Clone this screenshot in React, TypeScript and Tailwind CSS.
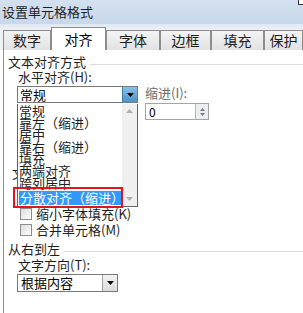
import React from "react";

const font = { fontFamily: '"Noto Sans CJK SC", "Liberation Sans", sans-serif' };

const tabs = ["数字", "对齐", "字体", "边框", "填充", "保护"];
const tabWidths = [48, 55, 54, 51, 53, 39];

const items = ["常规", "靠左（缩进）", "居中", "靠右（缩进）", "填充", "两端对齐", "跨列居中", "分散对齐（缩进）"];

function Arrow({ color = "#000" }: { color?: string }) {
  return (
    <svg width="7" height="4" viewBox="0 0 7 4">
      <path d="M0 0h7L3.5 4z" fill={color} />
    </svg>
  );
}

function Group({ title }: { title: string }) {
  return (
    <div className="flex items-center gap-1 h-[14px]">
      <span className="text-[13px] leading-[14px] text-[#1e1e1e]">{title}</span>
      <div className="flex-1 h-px bg-[#dcdcdc] mt-1" />
    </div>
  );
}

function Check({ label }: { label: string }) {
  return (
    <div className="flex items-center gap-[4px] h-[16px] pl-[12px]">
      <div className="w-[12px] h-[12px] border border-[#8f8f8f] bg-gradient-to-br from-[#dcdcdc] to-white" />
      <span className="text-[13px] leading-[14px] text-[#1e1e1e]">{label}</span>
    </div>
  );
}

export default function App() {
  return (
    <div className="w-[303px] h-[313px] bg-white overflow-hidden relative" style={font}>
      <div className="h-[24px] bg-gradient-to-b from-[#d3e0ef] to-[#c8d9ec] flex items-center pl-[2px] relative">
        <span className="text-[13px] leading-[14px] text-[#1e1e1e]">设置单元格格式</span>
        <div className="absolute right-[-2px] top-[-2px] w-[7px] h-[7px] border border-[#333] bg-white" />
      </div>
      <div className="h-[6px] bg-gradient-to-b from-[#dfe8f2] to-[#eef1f5]" />
      <div className="h-[20px] bg-[#eef1f5] flex items-end pl-[3px] relative">
        {tabs.map((t, i) =>
          i === 1 ? (
            <div
              key={t}
              style={{ width: tabWidths[i] }}
              className="h-[23px] -mt-[3px] bg-white border border-b-0 border-[#8d8d8d] flex items-center justify-center text-[14px] relative z-10"
            >
              {t}
            </div>
          ) : (
            <div
              key={t}
              style={{ width: tabWidths[i] }}
              className="h-[20px] bg-gradient-to-b from-[#f4f4f4] to-[#e2e2e2] border border-[#8d8d8d] border-b-0 flex items-center justify-center text-[14px] text-[#1e1e1e]"
            >
              {t}
            </div>
          )
        )}
      </div>
      <div className="ml-[3px] border-l border-[#8d8d8d] h-[263px] pl-[4px] pt-[5px] relative">
        <Group title="文本对齐方式" />
        <div className="pl-[10px] mt-[1px] text-[13px] leading-[14px] text-[#1e1e1e]">水平对齐(H):</div>
        <div className="flex items-start mt-[2px] pl-[9px]">
          <div className="w-[121px] h-[17px] border border-[#7a7a7a] flex items-center">
            <span className="flex-1 text-[13px] leading-[14px] pl-[2px]">常规</span>
            <div className="w-[15px] h-full bg-gradient-to-b from-[#8ac0e6] to-[#4d93c7] border-l border-[#3d7bad] flex items-center justify-center">
              <Arrow />
            </div>
          </div>
          <div className="ml-[7px]">
            <div className="text-[13px] leading-[14px] text-[#6d6d6d]">缩进(I):</div>
            <div className="w-[64px] h-[17px] mt-[3px] border border-[#a5a5a5] flex items-center">
              <span className="flex-1 text-[12px] pl-[3px]">0</span>
              <div className="w-[13px] h-full border-l border-[#b5b5b5] flex flex-col items-center justify-center gap-[2px] bg-[#eeeeee]">
                <svg width="5" height="3" viewBox="0 0 5 3"><path d="M0 3h5L2.5 0z" fill="#6a7c96" /></svg>
                <svg width="5" height="3" viewBox="0 0 5 3"><path d="M0 0h5L2.5 3z" fill="#6a7c96" /></svg>
              </div>
            </div>
          </div>
        </div>
        <div className="mt-[46px] pl-[4px] text-[13px] leading-[14px] text-[#1e1e1e]">文本控制</div>
        <div className="mt-[26px]">
          <Check label="缩小字体填充(K)" />
          <Check label="合并单元格(M)" />
        </div>
        <div className="mt-[4px]">
          <Group title="从右到左" />
        </div>
        <div className="pl-[10px] mt-[2px] text-[13px] leading-[14px] text-[#1e1e1e]">文字方向(T):</div>
        <div className="mt-[2px] pl-[9px]">
          <div className="w-[101px] h-[18px] border border-[#7a7a7a] flex items-center">
            <span className="flex-1 text-[13px] leading-[14px] pl-[3px]">根据内容</span>
            <div className="w-[15px] h-full bg-gradient-to-b from-[#f4f4f4] to-[#dcdcdc] border-l border-[#a0a0a0] flex items-center justify-center">
              <Arrow />
            </div>
          </div>
        </div>

        <div className="absolute left-[13px] top-[54px] w-[121px] h-[103px] bg-white border border-[#646464] border-t-0 flex z-20">
          <div className="flex-1 pt-[1px]">
            {items.map((it, i) =>
              i === items.length - 1 ? (
                <div key={it} className="mt-[2px] ml-[1px] h-[14px] bg-[#3399ff] text-white text-[13px] leading-[14px] pl-[1px]">
                  {it}
                </div>
              ) : (
                <div key={it} className="h-[12px] text-[13px] leading-[12px] text-[#1e1e1e] pl-[1px]">
                  {it}
                </div>
              )
            )}
          </div>
          <div className="w-[15px] bg-[#f0f0f0] flex flex-col items-center justify-between py-[5px]">
            <svg width="7" height="4" viewBox="0 0 7 4"><path d="M0 4h7L3.5 0z" fill="#b0b0b0" /></svg>
            <Arrow color="#b0b0b0" />
          </div>
        </div>
        <div className="absolute left-[9px] top-[137px] w-[110px] h-[21px] border-2 border-[#e0161e] z-30" />
      </div>
    </div>
  );
}
